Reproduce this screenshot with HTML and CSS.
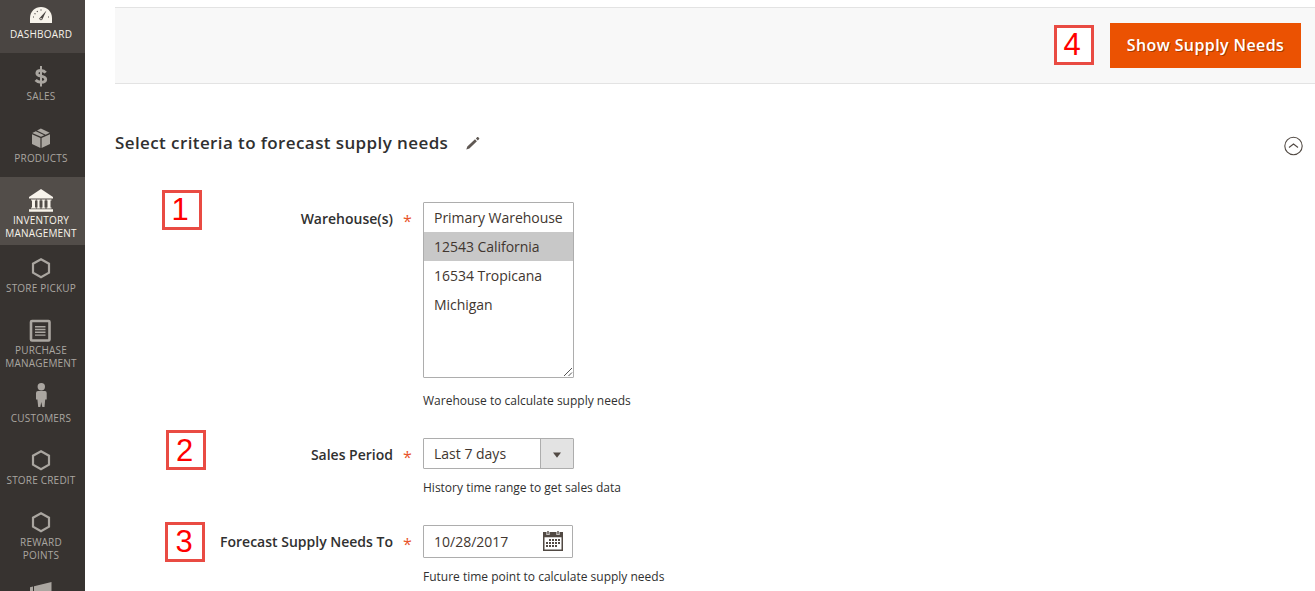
FILE: index.html
```html
<!DOCTYPE html>
<html lang="en">
<head>
<meta charset="utf-8">
<title>Supply Needs</title>
<link rel="stylesheet" href="styles.css">
</head>
<body>
<div class="app">
  <nav class="menu">
    <a class="item dashboard"><span class="icon"><svg width="24" height="24" viewBox="0 0 24 24"><path fill="currentColor" d="M1 20V15C1 8.500 6 4 12 4s11 4.500 11 11v5z"/><path d="M4 14h1M5.500 10.500l1 .5M8 8l.6.8M12 6.500v1M19 14h1" stroke="#4a4542" stroke-width="1.200"/><path d="M17.500 7.500l-4.300 9.300a1.700 1.700 0 0 1-2.800-1.600z" fill="#4a4542"/><circle cx="12" cy="15.700" r=".8" fill="#f7f3eb"/></svg></span><span class="label">DASHBOARD</span></a>
    <a class="item"><span class="icon"><svg width="24" height="24" viewBox="0 0 24 24"><path fill="none" stroke="currentColor" stroke-width="2.900" d="M16.700 8.600C15.500 7.100 13.900 6.500 12 6.500c-2.500 0-4.100 1.100-4.100 2.800 0 4.200 8.800 1.500 8.800 6 0 1.800-1.700 3-4.700 3-2.200 0-4-.7-5.400-2.200"/><path stroke="currentColor" stroke-width="2" d="M12 2v20.500"/></svg></span><span class="label">SALES</span></a>
    <a class="item"><span class="icon"><svg width="24" height="24" viewBox="0 0 24 24"><g fill="currentColor"><path d="M3 8.300l8.400 3.700v10L3 18zM21 8.300L12.600 12v10l8.400-4z"/><path d="M3.300 7l3.500-1.800 8.500 4L12 10.800zM8 4.600L11.900 2.500l8.800 4.300-4.100 1.900z"/></g></svg></span><span class="label">PRODUCTS</span></a>
    <a class="item active"><span class="icon"><svg width="26" height="24" viewBox="0 0 26 24"><path fill="currentColor" d="M13 1l12 8v1.500H1V9zM3 11.500h5v1H7v7h1v1H3v-1h1v-7H3zM8.500 11.500h4v1h-1v7h1v1h-4v-1h1v-7h-1zM13.500 11.500h4v1h-1v7h1v1h-4v-1h1v-7h-1zM18.500 11.500h5v1h-1v7h1v1h-5v-1h1v-7h-1zM1 21.200h24V23.700H1z"/></svg></span><span class="label">INVENTORY<br>MANAGEMENT</span></a>
    <a class="item"><span class="icon"><svg width="24" height="24" viewBox="0 0 24 24"><path fill="none" stroke="currentColor" stroke-width="2.200" d="M12 3.200l8 4.500v9l-8 4.500-8-4.500v-9z"/></svg></span><span class="label">STORE PICKUP</span></a>
    <a class="item"><span class="icon"><svg width="24" height="24" viewBox="0 0 24 24"><rect x="2" y="3" width="18.500" height="19.500" rx="1" fill="none" stroke="currentColor" stroke-width="2.600"/><path stroke="currentColor" stroke-width="1.400" d="M6 8.700h10.500M6 11.500h10.500M6 14.300h10.500M6 17.100h10.500"/></svg></span><span class="label">PURCHASE<br>MANAGEMENT</span></a>
    <a class="item person"><span class="icon"><svg width="24" height="26" viewBox="0 0 24 26"><g fill="currentColor"><circle cx="12.300" cy="4.700" r="3.700"/><path d="M9 9h7q1.700 0 1.700 2v6.500h-1.500l-.7 7.500h-2.200l-1-5-1 5H9.200l-.8-7.500H7V11q0-2 2-2z"/></g></svg></span><span class="label">CUSTOMERS</span></a>
    <a class="item"><span class="icon"><svg width="24" height="24" viewBox="0 0 24 24"><path fill="none" stroke="currentColor" stroke-width="2.200" d="M12 3.200l8 4.500v9l-8 4.500-8-4.500v-9z"/></svg></span><span class="label">STORE CREDIT</span></a>
    <a class="item"><span class="icon"><svg width="24" height="24" viewBox="0 0 24 24"><path fill="none" stroke="currentColor" stroke-width="2.200" d="M12 3.200l8 4.500v9l-8 4.500-8-4.500v-9z"/></svg></span><span class="label">REWARD<br>POINTS</span></a>
    <a class="item"><span class="icon"><svg width="24" height="24" viewBox="0 0 24 24"><path fill="currentColor" d="M1 9.300l3-.7V20H1zM5 8.300L22.500 4v19L5 19z"/></svg></span></a>
  </nav>
  <main class="main">
    <header class="toolbar">
      <span class="step">4</span>
      <button class="primary">Show Supply Needs</button>
    </header>
    <section class="criteria">
      <div class="heading">
        <h2>Select criteria to forecast supply needs</h2>
        <svg class="pencil" width="14" height="14" viewBox="0 0 14 14"><path fill="#5f5853" d="M.3 13.600l1-3 7.700-7.300 1.900 1.900-7.500 7.400zM9.900 2.500l1.400-1.400q.4-.3.800 0l1.100 1.100q.3.400 0 .8l-1.400 1.400z"/></svg>
        <svg class="collapse" width="20" height="20" viewBox="0 0 20 20"><circle cx="10.500" cy="10" r="8.700" fill="none" stroke="#514943" stroke-width="1.100"/><path d="M6 11.500l4.500-3.500 4.500 3.500" fill="none" stroke="#514943" stroke-width="1.100"/></svg>
      </div>
      <div class="field">
        <span class="field-label">Warehouse(s)</span><span class="required">*</span>
        <div class="control">
          <div class="list">
            <div class="option">Primary Warehouse</div>
            <div class="option selected">12543 California</div>
            <div class="option">16534 Tropicana</div>
            <div class="option">Michigan</div>
            <svg class="grip" width="10" height="10" viewBox="0 0 10 10"><path d="M1 9l8-8M5.500 9L9 5.500" stroke="#555" stroke-width="1"/></svg>
          </div>
          <p class="note">Warehouse to calculate supply needs</p>
        </div>
      </div>
      <div class="field period">
        <span class="field-label">Sales Period</span><span class="required">*</span>
        <div class="control">
          <div class="select"><span>Last 7 days</span><span class="arrow"><svg width="8" height="6" viewBox="0 0 8 6"><path fill="#514943" d="M0 .5h8L4 5.800z"/></svg></span></div>
          <p class="note">History time range to get sales data</p>
        </div>
      </div>
      <div class="field until">
        <span class="field-label">Forecast Supply Needs To</span><span class="required">*</span>
        <div class="control">
          <div class="date"><span>10/28/2017</span><svg class="calendar" width="20" height="20" viewBox="0 0 20 20"><path fill="#514943" d="M0 1h20v19H0zM1.500 6.200v12.300h17V6.200z" fill-rule="evenodd"/><path stroke="#fff" stroke-width="3" d="M5 0v4M15 0v4"/><path stroke="#514943" stroke-width="1.400" d="M5 0v3.500M15 0v3.500"/><path stroke="#514943" stroke-width="2" stroke-dasharray="2 1" d="M6 9h11M3 12h14M3 15h11"/></svg></div>
          <p class="note">Future time point to calculate supply needs</p>
        </div>
      </div>
    </section>
  </main>
  <span class="step mark one">1</span>
  <span class="step mark two">2</span>
  <span class="step mark three">3</span>
</div>
</body>
</html>
```
FILE: styles.css
```css
* { box-sizing: border-box; }
body { margin: 0; background: #fff; font: 14px/20px "Open Sans", sans-serif; color: #41362f; }
.app { position: relative; display: flex; width: 1315px; height: 591px; overflow: hidden; }
.menu { flex: none; width: 85px; background: #373330; color: #aaa6a0; overflow: hidden; }
.item { display: flex; flex-direction: column; align-items: center; min-height: 62px; padding: 10px 3px 5px 0; color: inherit; }
.dashboard { height: 62px; margin-top: -9px; padding-top: 12px; background: #4a4542; color: #f7f3eb; }
.dashboard .icon { height: 25px; }
.active { background: #524d49; color: #f7f3eb; }
.icon { display: flex; align-items: center; justify-content: center; height: 27px; padding-bottom: 2px; }
.person { padding-top: 7px; }
.person .icon { height: 30px; padding-bottom: 4px; }
.label { font-size: 10px; line-height: 13px; text-align: center; white-space: nowrap; letter-spacing: .2px; }
.main { flex: 1; padding: 7px 0 0 30px; }
.toolbar { display: flex; justify-content: flex-end; align-items: center; gap: 16px; height: 77px; padding-right: 14px; background: #f8f8f8; border: solid #e3e3e3; border-width: 1px 0; }
.toolbar .step { margin-bottom: 1px; }
.primary { width: 191px; height: 45px; padding: 0; border: 0; background: #eb5202; color: #fff; font: 600 16px/45px "Open Sans", sans-serif; letter-spacing: .4px; text-shadow: 1px 1px 0 rgba(0,0,0,.3); }
.step { display: block; width: 40px; height: 40px; padding-right: 4px; border: 3px solid #e94b43; background: #fff; color: #f00; font: 31px/34px "Liberation Sans", Arial, sans-serif; text-align: center; }
.mark { position: absolute; }
.one { left: 162px; top: 190px; }
.two { left: 166px; top: 430px; padding-right: 3px; line-height: 35px; }
.three { left: 165px; top: 522px; padding-right: 2px; }
.heading { display: flex; align-items: center; height: 24px; margin-top: 47px; }
.heading h2 { margin: 0; font-size: 17px; line-height: 24px; font-weight: 600; letter-spacing: .4px; color: #303030; white-space: nowrap; }
.pencil { margin-left: 18px; }
.collapse { margin: 6px 12px 0 auto; }
.field { display: grid; grid-template-columns: 278px 30px 1fr; margin-top: 47px; }
.field-label { padding-top: 7px; font-weight: 600; text-align: right; color: #303030; white-space: nowrap; }
.required { padding: 9px 0 0 10px; color: #e8542a; font-size: 16px; }
.list { position: relative; width: 151px; height: 176px; border: 1px solid #adadad; border-radius: 1px; background: #fff; }
.option { height: 29px; padding-left: 10px; line-height: 30px; white-space: nowrap; letter-spacing: -.03px; }
.selected { background: #c8c8c8; }
.grip { position: absolute; right: 0; bottom: 0; }
.note { margin: 14px 0 0; font-size: 12px; line-height: 18px; color: #303030; white-space: nowrap; }
.period { margin-top: 28px; }
.select { display: flex; justify-content: space-between; width: 151px; height: 31px; padding-left: 10px; border: 1px solid #adadad; border-radius: 1px; line-height: 29px; }
.arrow { display: flex; align-items: center; justify-content: center; width: 33px; padding-top: 3px; border-left: 1px solid #adadad; background: #e3e3e3; }
.period .note { margin-top: 10px; }
.until { margin-top: 28px; }
.date { display: flex; align-items: center; justify-content: space-between; width: 150px; height: 33px; padding: 0 9px 0 10px; border: 1px solid #adadad; border-radius: 1px; }
.calendar { margin-bottom: 1px; }
.until .note { margin-top: 10px; }
```
